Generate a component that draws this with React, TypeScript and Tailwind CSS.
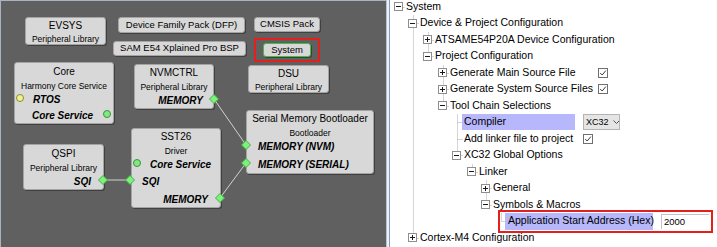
import React from "react";

// Diagram canvas pieces
const Node = ({ className, children }: { className: string; children?: React.ReactNode }) => (
    <div
        className={`absolute flex flex-col rounded-[3px] border border-[#a4a4a4] bg-[#d8d8d8] pt-px text-black shadow-[1px_1px_0_#404040] ${className}`}
    >
        {children}
    </div>
);

const Chip = ({ className, label }: { className: string; label: string }) => (
    <div
        className={`absolute flex items-center justify-center rounded-[3px] border bg-[#d8d8d8] text-[9.5px] text-black shadow-[1px_1px_0_#404040] ${className}`}
    >
        {label}
    </div>
);

const Canvas = () => (
    <div className="relative h-[247px] w-[386px] shrink-0 border-l border-t border-[#a9b4c0] bg-[#606060] font-['Liberation_Sans',Arial,sans-serif]">
        <Node className="left-[24px] top-[16px] h-[28px] w-[81px] items-center">
            <div className="h-[14px] text-[10px] leading-[14px]">EVSYS</div>
            <div className="h-[13px] text-[8.5px] leading-[13px]">Peripheral Library</div>
        </Node>
        <Chip className="left-[117px] top-[16px] h-[16px] w-[127px] border-[#a4a4a4]" label="Device Family Pack (DFP)" />
        <Chip className="left-[253px] top-[16px] h-[15px] w-[66px] border-[#a4a4a4]" label="CMSIS Pack" />
        <Chip className="left-[112px] top-[40px] h-[15px] w-[133px] border-[#a4a4a4]" label="SAM E54 Xplained Pro BSP" />
        <Chip className="left-[262px] top-[42px] h-[14px] w-[48px] border-[#3fbf3f]" label="System" />
        <div className="absolute left-[253px] top-[37px] h-[24px] w-[66px] border-2 border-[#e3201c]" />

        <Node className="left-[247px] top-[64px] h-[28px] w-[81px] items-center">
            <div className="h-[14px] text-[10px] leading-[14px]">DSU</div>
            <div className="h-[13px] text-[8.5px] leading-[13px]">Peripheral Library</div>
        </Node>

        <Node className="left-[13px] top-[61px] h-[62px] w-[100px]">
            <div className="h-[16px] text-center text-[10px] leading-[16px]">Core</div>
            <div className="h-[12px] text-center text-[8.5px] leading-[12px]">Harmony Core Service</div>
            <div className="h-[16px] pl-[18px] text-[10px] font-bold italic leading-[16px]">RTOS</div>
            <div className="h-[16px] pl-[17px] text-[10px] font-bold italic leading-[16px]">Core Service</div>
        </Node>

        <Node className="left-[133px] top-[63px] h-[45px] w-[80px]">
            <div className="h-[14px] text-center text-[10px] leading-[14px]">NVMCTRL</div>
            <div className="h-[14px] text-center text-[8.5px] leading-[14px]">Peripheral Library</div>
            <div className="h-[14px] pr-[10px] text-right text-[10px] font-bold italic leading-[14px]">MEMORY</div>
        </Node>

        <Node className="left-[245px] top-[109px] h-[64px] w-[128px]">
            <div className="h-[14px] text-center text-[10px] leading-[14px]">Serial Memory Bootloader</div>
            <div className="h-[14px] text-center text-[8.5px] leading-[14px]">Bootloader</div>
            <div className="h-[14px] pl-[11px] text-[10px] font-bold italic leading-[14px]">MEMORY (NVM)</div>
            <div className="mt-[4px] h-[14px] pl-[11px] text-[10px] font-bold italic leading-[14px]">MEMORY (SERIAL)</div>
        </Node>

        <Node className="left-[22px] top-[143px] h-[46px] w-[81px]">
            <div className="h-[16px] text-center text-[10px] leading-[16px]">QSPI</div>
            <div className="h-[12px] text-center text-[8.5px] leading-[12px]">Peripheral Library</div>
            <div className="h-[16px] pr-[12px] text-right text-[10px] font-bold italic leading-[16px]">SQI</div>
        </Node>

        <Node className="left-[130px] top-[127px] h-[80px] w-[90px]">
            <div className="h-[14px] text-center text-[10px] leading-[14px]">SST26</div>
            <div className="h-[14px] text-center text-[8.5px] leading-[14px]">Driver</div>
            <div className="h-[14px] pl-[18px] text-[10px] font-bold italic leading-[14px]">Core Service</div>
            <div className="h-[20px] pl-[10px] text-[10px] font-bold italic leading-[20px]">SQI</div>
            <div className="h-[16px] pr-[12px] text-right text-[10px] font-bold italic leading-[16px]">MEMORY</div>
        </Node>

        {/* wires, ports */}
        <svg className="pointer-events-none absolute -left-px -top-px" width="386" height="247">
            <g stroke="#d2d2d2" strokeWidth="1">
                <line x1="214" y1="99" x2="246" y2="145" />
                <line x1="103" y1="180" x2="130" y2="180" />
                <line x1="220" y1="198" x2="246" y2="163" />
            </g>
            {[
                [214, 99],
                [246, 145],
                [246, 163],
                [103, 180],
                [130, 180],
                [220, 198],
            ].map(([x, y]) => (
                <polygon
                    key={`${x}-${y}`}
                    points={`${x},${y - 4.5} ${x + 4.5},${y} ${x},${y + 4.5} ${x - 4.5},${y}`}
                    fill="#7cf27c"
                    stroke="#45b045"
                    strokeWidth="1"
                />
            ))}
            <circle cx="20" cy="98" r="3.5" fill="#f2f28a" stroke="#8a8a3a" />
            <circle cx="107" cy="114" r="3.5" fill="#80ea80" stroke="#3f8f3f" />
            <circle cx="137" cy="163" r="3.5" fill="#80ea80" stroke="#3f8f3f" />
        </svg>
    </div>
);

// Tree pieces
type Row = {
    level: number;
    label: string;
    exp?: "minus" | "plus";
    kind?: "check" | "compiler" | "address" | "checkLinker";
};

const ROWS: Row[] = [
    { level: 0, label: "System", exp: "minus" },
    { level: 1, label: "Device & Project Configuration", exp: "minus" },
    { level: 2, label: "ATSAME54P20A Device Configuration", exp: "plus" },
    { level: 2, label: "Project Configuration", exp: "minus" },
    { level: 3, label: "Generate Main Source File", exp: "plus", kind: "check" },
    { level: 3, label: "Generate System Source Files", exp: "plus", kind: "check" },
    { level: 3, label: "Tool Chain Selections", exp: "minus" },
    { level: 4, label: "Compiler", kind: "compiler" },
    { level: 4, label: "Add linker file to project", kind: "checkLinker" },
    { level: 4, label: "XC32 Global Options", exp: "minus" },
    { level: 5, label: "Linker", exp: "minus" },
    { level: 6, label: "General", exp: "plus" },
    { level: 6, label: "Symbols & Macros", exp: "minus" },
    { level: 7, label: "Application Start Address (Hex)", kind: "address" },
    { level: 1, label: "Cortex-M4 Configuration", exp: "plus" },
];

const LEFTS = [4, 18, 33, 48, 62, 77, 91, 106];
const INDENT = ["w-[4px]", "w-[18px]", "w-[33px]", "w-[48px]", "w-[62px]", "w-[77px]", "w-[91px]", "w-[106px]"];
const ROW_H = 16.5;
const TOP = -1.5;

const cy = (i: number) => TOP + i * ROW_H + ROW_H / 2;
const cx = (level: number) => LEFTS[level] + 4.5;

const Expander = ({ type }: { type: "minus" | "plus" }) => (
    <svg width="9" height="9" className="shrink-0">
        <rect x="0.5" y="0.5" width="8" height="8" fill="#fff" stroke="#8e8e8e" />
        <line x1="2" y1="4.5" x2="7" y2="4.5" stroke="#1a1a1a" />
        {type === "plus" && <line x1="4.5" y1="2" x2="4.5" y2="7" stroke="#1a1a1a" />}
    </svg>
);

const Check = () => (
    <svg width="10" height="10" className="shrink-0">
        <rect x="0.5" y="0.5" width="9" height="9" fill="#fff" stroke="#6f6f6f" />
        <path d="M2.2 5 L4.2 7 L7.8 2.6" fill="none" stroke="#3a3a3a" strokeWidth="1" />
    </svg>
);

const TreeLines = () => {
    const segs: { x1: number; y1: number; x2: number; y2: number }[] = [];
    ROWS.forEach((r, i) => {
        if (r.level > 0) segs.push({ x1: cx(r.level), y1: cy(i), x2: LEFTS[r.level] + 11, y2: cy(i) });
        else segs.push({ x1: LEFTS[0] + 9, y1: cy(i), x2: LEFTS[0] + 11, y2: cy(i) });
        let last = -1;
        for (let j = i + 1; j < ROWS.length; j++) {
            if (ROWS[j].level <= r.level) break;
            if (ROWS[j].level === r.level + 1) last = j;
        }
        if (last > 0) segs.push({ x1: cx(r.level + 1), y1: cy(i) + ROW_H / 2, x2: cx(r.level + 1), y2: cy(last) });
    });
    return (
        <svg className="pointer-events-none absolute left-0 top-0" width="327" height="247">
            {segs.map((s, k) => (
                <line
                    key={k}
                    x1={Math.round(s.x1) + 0.5}
                    y1={Math.round(s.y1) + 0.5}
                    x2={Math.round(s.x2) + 0.5}
                    y2={Math.round(s.y2) + 0.5}
                    stroke="#ababab"
                    strokeDasharray="1 1"
                />
            ))}
        </svg>
    );
};

const TreeRow = ({ row }: { row: Row }) => (
    <div className="flex h-[16.5px] items-center whitespace-nowrap">
        <div className={`shrink-0 ${INDENT[row.level]}`} />
        {row.exp ? (
            <>
                <Expander type={row.exp} />
                <div className="w-[3px] shrink-0" />
            </>
        ) : (
            <div className="w-[12px] shrink-0" />
        )}
        {row.kind === "check" && (
            <>
                <span className="w-[148px] shrink-0">{row.label}</span>
                <Check />
            </>
        )}
        {row.kind === "checkLinker" && (
            <>
                <span className="w-[119px] shrink-0">{row.label}</span>
                <Check />
            </>
        )}
        {row.kind === "compiler" && (
            <>
                <span className="-ml-[2px] flex h-[16px] w-[113px] shrink-0 items-center bg-[#b7b7fb] pl-[2px]">
                    {row.label}
                </span>
                <span className="ml-[8px] flex h-[16px] w-[37px] items-center gap-[4px] border border-[#b4b4b4] bg-[#e5e5e5] pl-[2px] text-[9px]">
                    XC32
                    <svg width="7" height="5">
                        <path d="M0.5 0.5 L3.5 3.5 L6.5 0.5" fill="none" stroke="#555" />
                    </svg>
                </span>
            </>
        )}
        {row.kind === "address" && (
            <>
                <span className="-ml-[3px] flex h-[17px] w-[148px] shrink-0 items-center bg-[#b7b7fb] pl-[3px]">
                    {row.label}
                </span>
                <span className="ml-[8px] flex h-[15px] w-[48px] items-center border-l border-t border-[#c4c4c4] bg-white pl-[2px] text-[9.5px]">
                    2000
                </span>
            </>
        )}
        {!row.kind && <span>{row.label}</span>}
    </div>
);

const Tree = () => (
    <div className="relative h-[247px] flex-1 overflow-hidden bg-white font-['Liberation_Sans',Arial,sans-serif] text-[10.5px] text-black">
        <TreeLines />
        <div className="relative -mt-[1.5px] flex flex-col">
            {ROWS.map((r, i) => (
                <TreeRow key={i} row={r} />
            ))}
        </div>
        <div className="absolute left-[108px] top-[210px] h-[23px] w-[215px] border-2 border-[#e3201c]" />
    </div>
);

export default function App() {
    return (
        <div className="flex h-[247px] w-[717px] overflow-hidden">
            <Canvas />
            <div className="flex h-full w-[4px] shrink-0">
                <div className="w-px bg-[#b9c3cf]" />
                <div className="w-[2px] bg-[#eef1f4]" />
                <div className="w-px bg-[#7f9dc2]" />
            </div>
            <Tree />
        </div>
    );
}
